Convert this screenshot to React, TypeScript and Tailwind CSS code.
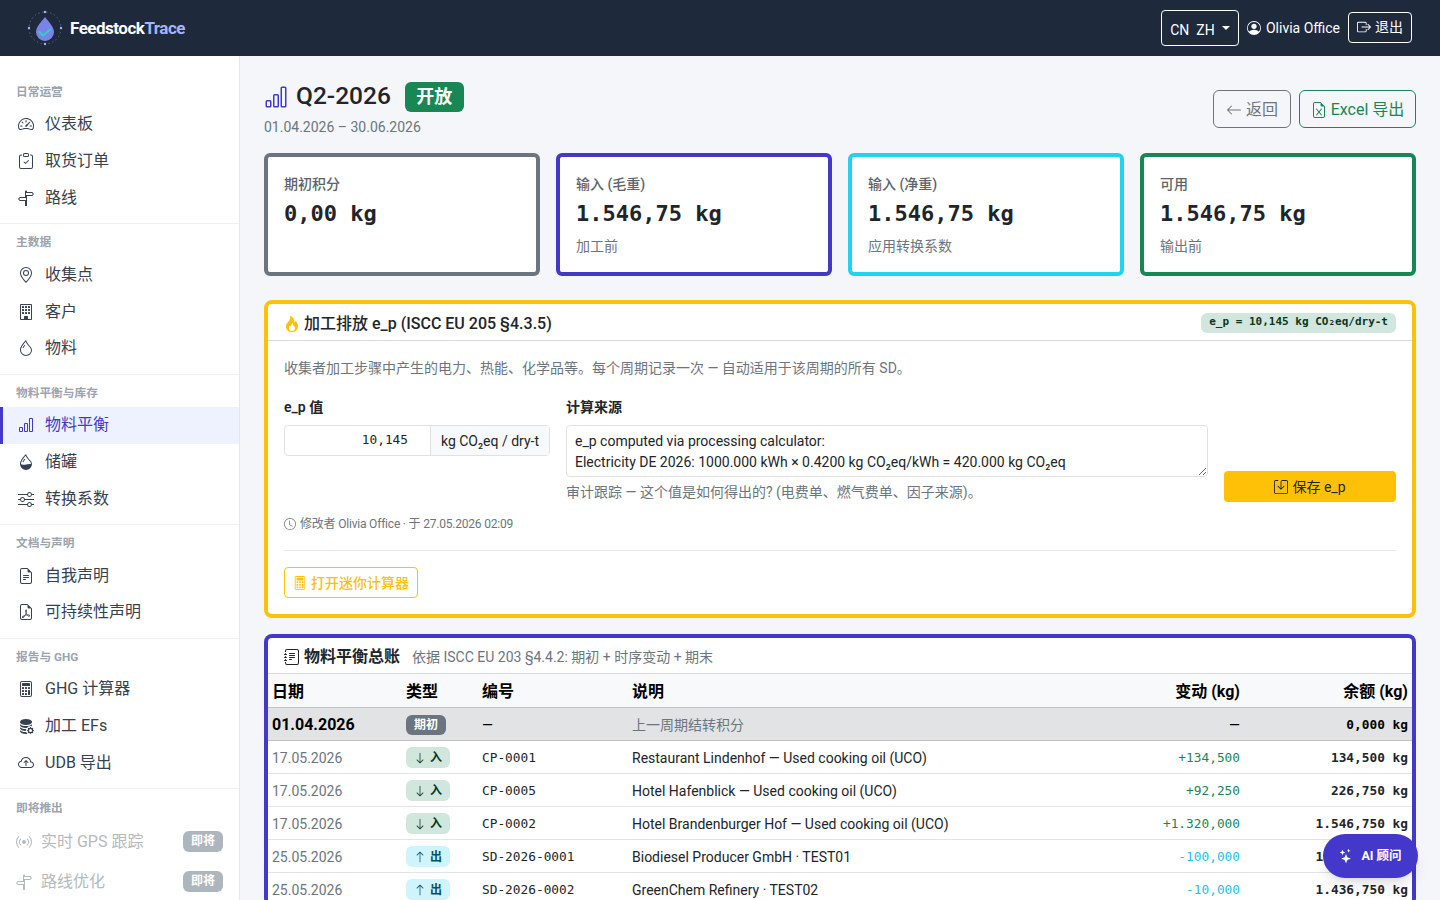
import type { ReactNode } from "react";
import {
  BsArrowDown,
  BsArrowLeft,
  BsArrowUp,
  BsBarChart,
  BsBoxArrowRight,
  BsBroadcast,
  BsBuilding,
  BsCalculator,
  BsClipboardCheck,
  BsClock,
  BsCloudArrowUp,
  BsDatabaseFillGear,
  BsDroplet,
  BsDropletHalf,
  BsFileEarmarkExcel,
  BsFileEarmarkPdf,
  BsFileEarmarkText,
  BsFire,
  BsGeoAlt,
  BsJournalText,
  BsPersonCircle,
  BsSave,
  BsSignpostSplit,
  BsSliders,
  BsSpeedometer2,
  BsStars,
} from "react-icons/bs";

const navGroups = [
  {
    label: "日常运营",
    items: [
      { name: "仪表板", icon: BsSpeedometer2 },
      { name: "取货订单", icon: BsClipboardCheck },
      { name: "路线", icon: BsSignpostSplit },
    ],
  },
  {
    label: "主数据",
    items: [
      { name: "收集点", icon: BsGeoAlt },
      { name: "客户", icon: BsBuilding },
      { name: "物料", icon: BsDroplet },
    ],
  },
  {
    label: "物料平衡与库存",
    items: [
      { name: "物料平衡", icon: BsBarChart, active: true },
      { name: "储罐", icon: BsDropletHalf },
      { name: "转换系数", icon: BsSliders },
    ],
  },
  {
    label: "文档与声明",
    items: [
      { name: "自我声明", icon: BsFileEarmarkText },
      { name: "可持续性声明", icon: BsFileEarmarkPdf },
    ],
  },
  {
    label: "报告与 GHG",
    items: [
      { name: "GHG 计算器", icon: BsCalculator },
      { name: "加工 EFs", icon: BsDatabaseFillGear },
      { name: "UDB 导出", icon: BsCloudArrowUp },
    ],
  },
];

const stats = [
  { label: "期初积分", value: "0,00 kg", note: "", border: "border-[#6c757d]" },
  { label: "输入 (毛重)", value: "1.546,75 kg", note: "加工前", border: "border-[#4338ca]" },
  { label: "输入 (净重)", value: "1.546,75 kg", note: "应用转换系数", border: "border-[#22d3ee]" },
  { label: "可用", value: "1.546,75 kg", note: "输出前", border: "border-[#198754]" },
];

const rows = [
  { date: "17.05.2026", dir: "in", ref: "CP-0001", text: "Restaurant Lindenhof — Used cooking oil (UCO)", change: "+134,500", balance: "134,500 kg" },
  { date: "17.05.2026", dir: "in", ref: "CP-0005", text: "Hotel Hafenblick — Used cooking oil (UCO)", change: "+92,250", balance: "226,750 kg" },
  { date: "17.05.2026", dir: "in", ref: "CP-0002", text: "Hotel Brandenburger Hof — Used cooking oil (UCO)", change: "+1.320,000", balance: "1.546,750 kg" },
  { date: "25.05.2026", dir: "out", ref: "SD-2026-0001", text: "Biodiesel Producer GmbH · TEST01", change: "-100,000", balance: "1.446,750 kg" },
  { date: "25.05.2026", dir: "out", ref: "SD-2026-0002", text: "GreenChem Refinery · TEST02", change: "-10,000", balance: "1.436,750 kg" },
];

const sans = "font-['Roboto','Noto_Sans_CJK_SC',sans-serif]";
const mono = "font-['DejaVu_Sans_Mono','Noto_Sans_CJK_SC',monospace]";

function Logo() {
  return (
    <svg width="36" height="36" viewBox="0 0 36 36" fill="none">
      <defs>
        <linearGradient id="drop" x1="18" y1="7" x2="18" y2="33">
          <stop offset="0" stopColor="#7c83e8" />
          <stop offset="1" stopColor="#4338ca" />
        </linearGradient>
      </defs>
      <circle cx="18" cy="18" r="16" stroke="#64748b" strokeWidth="0.8" strokeDasharray="1.5 2.5" />
      <circle cx="18" cy="2" r="1.2" fill="#a5b4fc" />
      <circle cx="18" cy="34" r="1.2" fill="#a5b4fc" />
      <circle cx="2" cy="18" r="1.2" fill="#a5b4fc" />
      <circle cx="34" cy="18" r="1.2" fill="#a5b4fc" />
      <path d="M18 7c4 5 9 10 9 15a9 9 0 0 1-18 0c0-5 5-10 9-15z" fill="url(#drop)" />
      <path d="M12.500 22l3.500 3.500 7-6" stroke="#2dd4bf" strokeWidth="1.800" strokeLinecap="round" strokeLinejoin="round" />
    </svg>
  );
}

function SoonItem({ icon, name }: { icon: ReactNode; name: string }) {
  return (
    <div className="flex h-[40px] items-center pr-4 pl-4 text-[#b4b9be]">
      <span className="flex w-[25px] shrink-0 text-base">{icon}</span>
      <span className="flex-1 text-base">{name}</span>
      <span className="mb-0.5 flex h-[21px] w-10 items-center justify-center rounded-md bg-[#adb5bd] text-xs font-bold text-white">即将</span>
    </div>
  );
}

function Sidebar() {
  return (
    <aside className="w-[240px] shrink-0 overflow-hidden border-r border-[#e5e7eb] bg-white pt-[18px]">
      {navGroups.map((group) => (
        <div key={group.label} className="border-b border-[#eef0f2] pt-[10px] pb-[7px]">
          <div className="mb-[6px] h-[16px] pl-4 text-[11.700px] leading-4 font-bold text-[#9ca3af]">{group.label}</div>
          {group.items.map((item) => (
            <div
              key={item.name}
              className={
                item.active
                  ? "flex h-[36.800px] items-center border-l-[3px] border-[#4338ca] bg-[#eef2ff] pl-[15px] text-base text-[#4338ca]"
                  : "flex h-[36.800px] items-center pl-[18px] text-base text-[#374151]"
              }
            >
              <item.icon className="mr-[11px] size-4 shrink-0" />
              {item.name}
            </div>
          ))}
        </div>
      ))}
      <div className="pt-[11px]">
        <div className="mb-[6px] h-[16px] pl-4 text-[11.700px] leading-4 font-bold text-[#9ca3af]">即将推出</div>
        <SoonItem icon={<BsBroadcast />} name="实时 GPS 跟踪" />
        <SoonItem icon={<BsSignpostSplit />} name="路线优化" />
      </div>
    </aside>
  );
}

function ProcessCard() {
  return (
    <section className="rounded-lg border-4 border-[#ffc107] bg-white">
      <div className="flex h-[37px] items-center justify-between border-b border-[#d9dadb] pr-4 pl-4">
        <div className="flex items-center gap-1 pt-[3px] text-base font-medium text-[#212529]">
          <BsFire className="size-4 text-[#ffc107]" />
          加工排放 e_p (ISCC EU 205 §4.3.5)
        </div>
        <span className={`${mono} mt-px flex h-5 items-center rounded-md bg-[#d1e7dd] px-2 text-[11px] font-bold text-[#0a3622]`}>
          e_p = 10,145 kg CO₂eq/dry-t
        </span>
      </div>
      <div className="px-4 pt-[17px] pb-4">
        <p className="text-sm leading-[20px] text-[#6c757d]">
          收集者加工步骤中产生的电力、热能、化学品等。每个周期记录一次 — 自动适用于该周期的所有 SD。
        </p>
        <div className="mt-[19px] flex items-start gap-4">
          <div className="w-[266px] shrink-0">
            <div className="mb-2 text-sm leading-5 font-semibold text-[#212529]">e_p 值</div>
            <div className="flex h-[31px] rounded border border-[#dee2e6] text-sm">
              <div className={`${mono} flex w-[146px] items-center justify-end border-r border-[#dee2e6] pr-[22px] text-[12.800px] text-[#212529]`}>10,145</div>
              <div className="flex flex-1 items-center justify-center bg-[#f8f9fa] text-[#212529]">kg CO₂eq / dry-t</div>
            </div>
          </div>
          <div className="w-[642px] shrink-0">
            <div className="mb-2 text-sm leading-5 font-semibold text-[#212529]">计算来源</div>
            <textarea
              readOnly
              className="block h-[52px] w-full rounded border border-[#dee2e6] px-2 py-[5px] text-sm leading-[21px] text-[#212529] outline-none"
              value={"e_p computed via processing calculator:\nElectricity DE 2026: 1000.000 kWh × 0.4200 kg CO₂eq/kWh = 420.000 kg CO₂eq"}
            />
            <div className="mt-[5px] text-sm leading-5 text-[#6c757d]">审计跟踪 — 这个值是如何得出的? (电费单、燃气费单、因子来源)。</div>
          </div>
          <button className="mt-[74px] flex h-[31px] flex-1 items-center justify-center gap-1 rounded bg-[#ffc107] text-sm text-[#212529]">
            <BsSave className="size-[14px]" />
            保存 e_p
          </button>
        </div>
        <div className="mt-3 flex items-center gap-1 text-[12px] leading-5 tracking-[-0.2px] text-[#6c757d]">
          <BsClock className="size-3" />
          修改者 Olivia Office · 于 27.05.2026 02:09
        </div>
        <hr className="mt-[16px] border-[#e5e7eb]" />
        <button className="mt-[16px] flex h-[31px] w-[134px] items-center justify-center gap-1 rounded border border-[#ffc107] text-sm font-medium text-[#ffc107]">
          <BsCalculator className="size-[14px]" />
          打开迷你计算器
        </button>
      </div>
    </section>
  );
}

function Ledger() {
  return (
    <section className="rounded-lg border-4 border-b-0 border-[#4338ca] bg-white">
      <div className="flex h-9 items-center gap-3 border-b border-[#d9dadb] px-4">
        <div className="flex items-center gap-1 pt-0.5 text-base font-semibold text-[#212529]">
          <BsJournalText className="size-4" />
          物料平衡总账
        </div>
        <span className="pt-0.5 text-sm text-[#6c757d]">依据 ISCC EU 203 §4.4.2: 期初 + 时序变动 + 期末</span>
      </div>
      <table className="w-full table-fixed border-collapse">
        <colgroup>
          <col className="w-[134px]" />
          <col className="w-[76px]" />
          <col className="w-[150px]" />
          <col />
          <col className="w-[168px]" />
          <col className="w-[168px]" />
        </colgroup>
        <thead>
          <tr className="h-[33px] border-b border-[#bfc1c3] bg-[#f8f9fa] text-base text-black">
            <th className="px-1 pt-1 text-left font-bold">日期</th>
            <th className="px-1 pt-1 text-left font-bold">类型</th>
            <th className="px-1 pt-1 text-left font-bold">编号</th>
            <th className="px-1 pt-1 text-left font-bold">说明</th>
            <th className="px-1 pt-1 text-right font-bold">变动 (kg)</th>
            <th className="px-1 pt-1 text-right font-bold">余额 (kg)</th>
          </tr>
        </thead>
        <tbody>
          <tr className="h-[33px] border-b border-[#bfc1c3] bg-[#e2e3e5] text-black">
            <td className="px-1 pt-0.5 text-base font-bold">01.04.2026</td>
            <td className="px-1 pt-0.5">
              <span className="flex h-5 w-10 items-center justify-center rounded-md bg-[#6c757d] text-xs font-bold text-white">期初</span>
            </td>
            <td className="px-1 pt-0.5 text-sm">—</td>
            <td className="px-1 pt-0.5 text-sm text-[#6c757d]">上一周期结转积分</td>
            <td className="px-1 pt-0.5 text-right text-sm">—</td>
            <td className={`${mono} px-1 pt-0.5 text-right text-[12.800px] font-bold`}>0,000 kg</td>
          </tr>
          {rows.map((row) => (
            <tr key={row.ref} className="h-[33px] border-b border-[#e3e4e6] text-[#212529]">
              <td className="px-1 pt-0.5 text-sm text-[#6c757d]">{row.date}</td>
              <td className="px-1 pt-0.5">
                <span
                  className={
                    row.dir === "in"
                      ? "flex h-[21px] w-11 items-center justify-center gap-1 rounded-md bg-[#d1e7dd] text-xs font-bold text-[#0a3622]"
                      : "flex h-[21px] w-11 items-center justify-center gap-1 rounded-md bg-[#cff4fc] text-xs font-bold text-[#055160]"
                  }
                >
                  {row.dir === "in" ? <BsArrowDown className="size-3" /> : <BsArrowUp className="size-3" />}
                  {row.dir === "in" ? "入" : "出"}
                </span>
              </td>
              <td className={`${mono} px-1 pt-0.5 text-[12.800px]`}>{row.ref}</td>
              <td className="px-1 pt-0.5 text-sm">{row.text}</td>
              <td className={`${mono} px-1 pt-0.5 text-right text-[12.800px] ${row.dir === "in" ? "text-[#198754]" : "text-[#22c3e6]"}`}>{row.change}</td>
              <td className={`${mono} px-1 pt-0.5 text-right text-[12.800px] font-semibold`}>{row.balance}</td>
            </tr>
          ))}
        </tbody>
      </table>
    </section>
  );
}

export default function App() {
  return (
    <div className={`${sans} relative flex h-screen flex-col overflow-hidden bg-[#f4f6f9]`}>
      <header className="flex h-14 shrink-0 items-center justify-between bg-[#1e293b] pr-7 pl-[27px] text-white">
        <div className="flex items-center gap-[7px]">
          <Logo />
          <span className="pt-px text-[17px] font-bold tracking-[-0.5px]">
            Feedstock<span className="text-[#a5b4fc]">Trace</span>
          </span>
        </div>
        <div className="flex items-center text-sm">
          <button className="flex h-9 w-[78px] items-center justify-center gap-[7px] rounded border border-white">
            <span className="pt-1">CN&nbsp; ZH</span>
            <span className="size-0 border-x-[4.500px] border-t-[4.500px] border-x-transparent border-t-white" />
          </button>
          <BsPersonCircle className="mr-[5px] ml-2 size-[14px]" />
          <span>Olivia Office</span>
          <button className="mb-[2px] ml-2 flex h-[31px] w-16 items-center justify-center gap-1 rounded border border-white">
            <BsBoxArrowRight className="size-[14px]" />
            退出
          </button>
        </div>
      </header>
      <div className="flex min-h-0 flex-1">
        <Sidebar />
        <main className="min-w-0 flex-1 overflow-hidden px-6 pt-[26px]">
          <div className="flex items-start justify-between">
            <div>
              <div className="flex items-center">
                <BsBarChart className="mr-2 size-6 text-[#4338ca]" />
                <span className="h-[30px] text-[24.500px] leading-[27px] font-medium text-[#212529]">Q2-2026</span>
                <span className="ml-[14px] flex h-[30px] w-[59px] items-center justify-center rounded-md bg-[#198754] text-lg font-bold text-white">开放</span>
              </div>
              <div className="mt-[5px] text-sm leading-5 text-[#6c757d]">01.04.2026 – 30.06.2026</div>
            </div>
            <div className="mt-2 flex gap-2 text-base">
              <button className="flex h-[38px] w-[78px] items-center justify-center gap-1 rounded-md border border-[#6c757d] pt-0.5 text-[#6c757d]">
                <BsArrowLeft className="size-4" />
                返回
              </button>
              <button className="flex h-[38px] w-[117px] items-center justify-center gap-1 rounded-md border border-[#198754] pt-0.5 text-[#198754]">
                <BsFileEarmarkExcel className="size-4" />
                Excel 导出
              </button>
            </div>
          </div>
          <div className="mt-4 grid grid-cols-4 gap-4">
            {stats.map((stat) => (
              <div key={stat.label} className={`h-[123px] rounded-md border-4 bg-white px-4 pt-[17px] ${stat.border}`}>
                <div className="text-sm leading-5 font-medium text-[#5c636a]">{stat.label}</div>
                <div className={`${mono} mt-[6px] text-[22px] leading-[28px] font-bold text-[#212529]`}>{stat.value}</div>
                <div className="mt-2 text-sm leading-5 text-[#6c757d]">{stat.note}</div>
              </div>
            ))}
          </div>
          <div className="mt-6">
            <ProcessCard />
          </div>
          <div className="mt-4">
            <Ledger />
          </div>
        </main>
      </div>
      <button className="absolute top-[834px] left-[1323px] flex h-11 w-[95px] items-center justify-center gap-2 rounded-[22px] bg-[#4338ca] text-[12.500px] font-bold text-white shadow-lg">
        <BsStars className="size-[14px]" />
        AI 顾问
      </button>
    </div>
  );
}
